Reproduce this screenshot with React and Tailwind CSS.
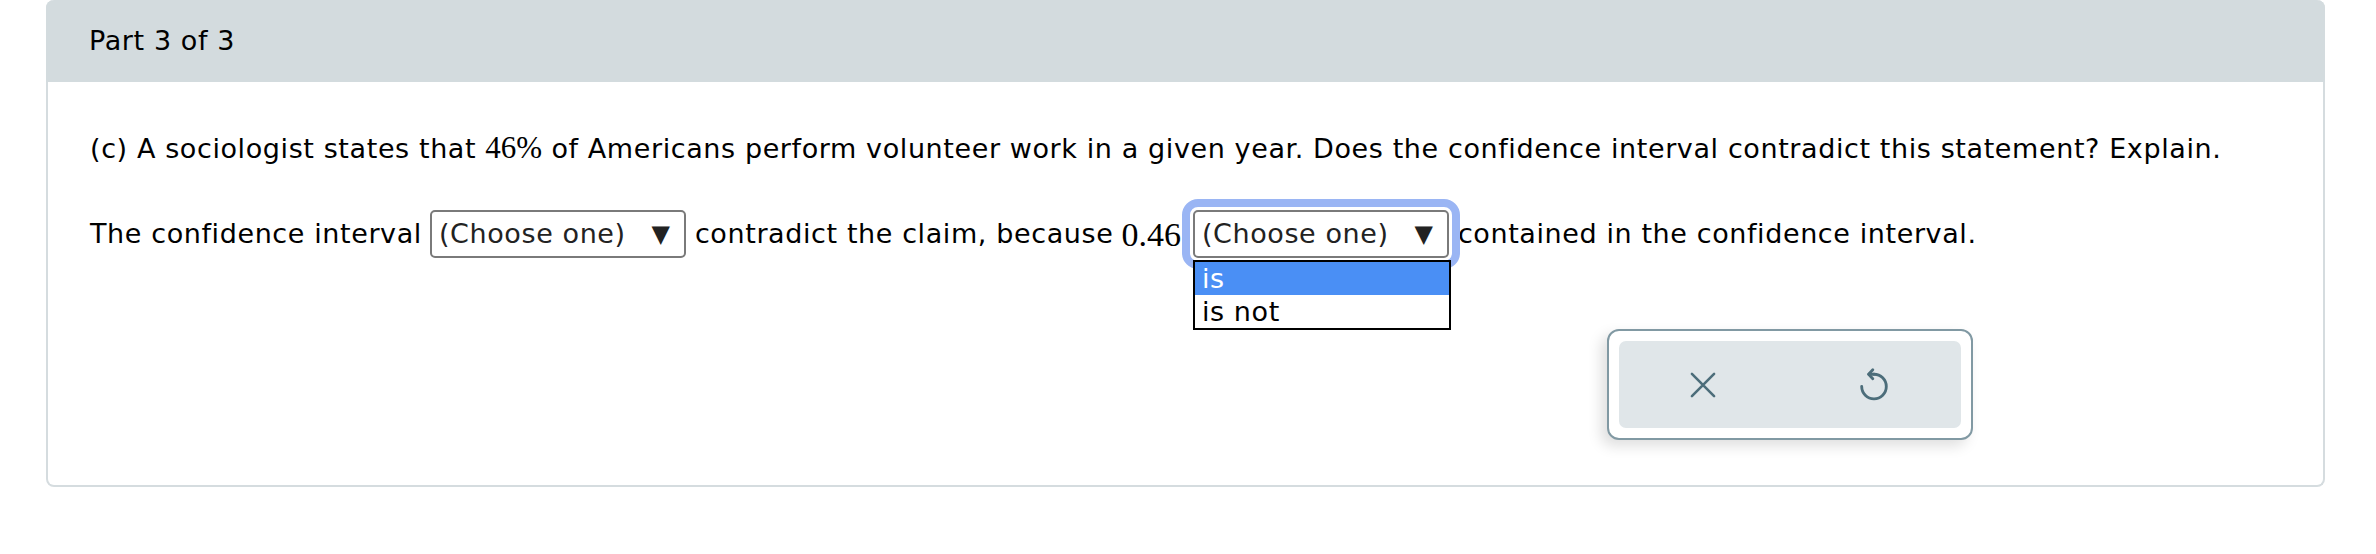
import React from 'react';

const font = { fontFamily: '"DejaVu Sans", Verdana, sans-serif' };
const serif = { fontFamily: '"Liberation Serif", "Times New Roman", serif' };

const Choose = ({ focused }) => (
  <div
    className={
      'flex items-center justify-between h-[48px] w-[256px] bg-white border-2 border-[#7a7a7a] rounded-[5px] pl-[7px] pr-[14px] text-[#222] ' +
      (focused ? 'outline-[8px] outline-solid outline-[#9ab5f4] outline-offset-[3px]' : '')
    }
  >
    <span>(Choose one)</span>
    <span className="text-[24px] tracking-normal">▼</span>
  </div>
);

const UndoIcon = () => (
  <svg width="36" height="36" viewBox="0 0 24 24" fill="none" stroke="#4c6d7a" strokeWidth="1.9" strokeLinecap="round" strokeLinejoin="round">
    <path d="M12 4.8 A8.2 8.2 0 1 1 3.8 13" />
    <path d="M11.2 1.8 L8.4 4.8 L11.2 7.8" />
    <path d="M8.6 4.8 H12" />
  </svg>
);

const XIcon = () => (
  <svg width="28" height="28" viewBox="0 0 24 24" fill="none" stroke="#4c6d7a" strokeWidth="2.2" strokeLinecap="round">
    <path d="M2.5 2.5 L21.5 21.5 M21.5 2.5 L2.5 21.5" />
  </svg>
);

export default function App() {
  return (
    <div className="bg-white w-[2376px] h-[554px] text-[27px] tracking-[0.6px] text-black" style={font}>
      <div className="ml-[46px] w-[2279px] rounded-[8px] border-2 border-t-0 border-[#d5dcdf]">
        <div className="h-[82px] bg-[#d3dbde] rounded-t-[8px] -mx-[2px] pl-[43px] flex items-center">
          Part 3 of 3
        </div>
        <div className="pl-[42px] pt-[48px] pb-[45px]">
          <p className="leading-[36px]">
            (c) A sociologist states that{' '}
            <span className="text-[31px] tracking-normal" style={serif}>46%</span>{' '}
            of Americans perform volunteer work in a given year. Does the confidence interval contradict this statement? Explain.
          </p>
          <div className="mt-[43px] flex items-center h-[48px]">
            <span>The confidence interval</span>
            <div className="ml-[8px]">
              <Choose />
            </div>
            <span className="ml-[9px]">contradict the claim, because</span>
            <span className="ml-[8px] text-[34px] tracking-normal" style={serif}>0.46</span>
            <div className="ml-[12px] relative">
              <Choose focused />
              <div className="absolute left-0 top-[50px] w-[258px] border-2 border-black bg-white z-10 leading-[33px]">
                <div className="bg-[#4a8ff5] text-white pl-[7px]">is</div>
                <div className="pl-[7px] text-black">is not</div>
              </div>
            </div>
            <span className="ml-[9px]">contained in the confidence interval.</span>
          </div>
          <div className="mt-[71px] ml-[1517px] w-[366px] h-[111px] border-2 border-[#8199a3] rounded-[12px] p-[10px] bg-white shadow-[-6px_6px_14px_rgba(0,0,0,0.13)]">
            <div className="h-full bg-[#e0e6e9] rounded-[7px] flex items-center justify-around">
              <XIcon />
              <UndoIcon />
            </div>
          </div>
        </div>
      </div>
    </div>
  );
}
